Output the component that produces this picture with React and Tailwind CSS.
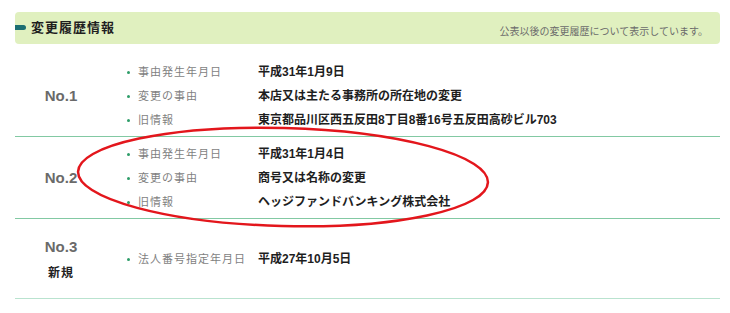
const HISTORY = [
  {
    no: "No.1",
    items: [
      ["事由発生年月日", "平成31年1月9日"],
      ["変更の事由", "本店又は主たる事務所の所在地の変更"],
      ["旧情報", "東京都品川区西五反田8丁目8番16号五反田高砂ビル703"],
    ],
  },
  {
    no: "No.2",
    items: [
      ["事由発生年月日", "平成31年1月4日"],
      ["変更の事由", "商号又は名称の変更"],
      ["旧情報", "ヘッジファンドバンキング株式会社"],
    ],
  },
  {
    no: "No.3",
    sub: "新規",
    items: [["法人番号指定年月日", "平成27年10月5日"]],
    last: true,
  },
];

function Row({ row }) {
  return (
    <div
      className={`flex items-center pt-[5px] pb-[4px] border-b ${
        row.last ? "border-[#b9e3cf] min-h-[80px]" : "border-[#82c9a3]"
      }`}
    >
      <div className="w-[92px] flex flex-col items-center">
        <span className="text-[15px] font-bold text-[#6a6a6a] leading-[20px]">
          {row.no}
        </span>
        {row.sub && (
          <span className="mt-[7px] text-[12px] font-bold text-[#222] tracking-[1px]">
            {row.sub}
          </span>
        )}
      </div>
      <ul className="pl-[20px]">
        {row.items.map(([label, value]) => (
          <li key={label} className="flex items-center h-[24px]">
            <span className="w-[3px] h-[3px] rounded-full bg-[#2e9d69] mr-[8px]" />
            <span className="text-[11px] tracking-[1px] text-[#7f7f7f] w-[120px] whitespace-nowrap">
              {label}
            </span>
            <span className="text-[12px] font-bold text-[#1e1e1e] whitespace-nowrap">
              {value}
            </span>
          </li>
        ))}
      </ul>
    </div>
  );
}

export default function App() {
  return (
    <div
      className="relative w-[730px] h-[313px] bg-white overflow-hidden"
      style={{ fontFamily: '"Liberation Sans", "Noto Sans CJK JP", sans-serif' }}
    >
      <div className="ml-[15px] mr-[10px] pt-[12px]">
        <div className="relative h-[32px] rounded-[4px] bg-[#e0f0bf] flex items-center justify-between pl-[16px] pr-[12px]">
          <span className="absolute left-0 top-[13px] w-[11px] h-[5px] rounded-r-full bg-[#1c6e71]" />
          <h2 className="text-[13px] font-bold tracking-[1px] text-[#1f1f1f]">変更履歴情報</h2>
          <p className="text-[10px] text-[#6b6b6b] pt-[7px]">公表以後の変更履歴について表示しています。</p>
        </div>

        <div className="mt-[11px]">
          {HISTORY.map((row) => (
            <Row key={row.no} row={row} />
          ))}
        </div>
      </div>

      {/* hand-drawn annotation */}
      <svg className="absolute left-0 top-0 pointer-events-none" width="730" height="313">
        <ellipse
          cx="283"
          cy="177"
          rx="205"
          ry="49"
          fill="none"
          stroke="#e3161c"
          strokeWidth="2.5"
          transform="rotate(1.5 283 177)"
        />
      </svg>
    </div>
  );
}
